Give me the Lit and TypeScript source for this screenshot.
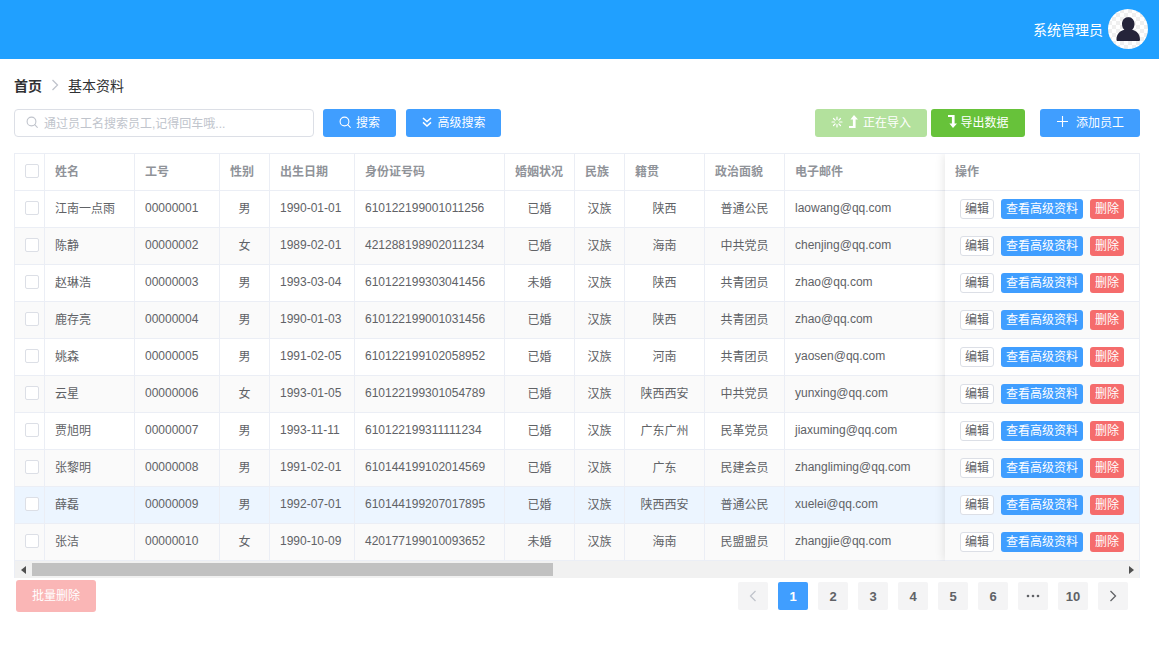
import { LitElement, html, css, svg } from "lit";
import { customElement } from "lit/decorators.js";

const rows = [
  ["江南一点雨","00000001","男","1990-01-01","610122199001011256","已婚","汉族","陕西","普通公民","laowang@qq.com"],
  ["陈静","00000002","女","1989-02-01","421288198902011234","已婚","汉族","海南","中共党员","chenjing@qq.com"],
  ["赵琳浩","00000003","男","1993-03-04","610122199303041456","未婚","汉族","陕西","共青团员","zhao@qq.com"],
  ["鹿存亮","00000004","男","1990-01-03","610122199001031456","已婚","汉族","陕西","共青团员","zhao@qq.com"],
  ["姚森","00000005","男","1991-02-05","610122199102058952","已婚","汉族","河南","共青团员","yaosen@qq.com"],
  ["云星","00000006","女","1993-01-05","610122199301054789","已婚","汉族","陕西西安","中共党员","yunxing@qq.com"],
  ["贾旭明","00000007","男","1993-11-11","610122199311111234","已婚","汉族","广东广州","民革党员","jiaxuming@qq.com"],
  ["张黎明","00000008","男","1991-02-01","610144199102014569","已婚","汉族","广东","民建会员","zhangliming@qq.com"],
  ["薛磊","00000009","男","1992-07-01","610144199207017895","已婚","汉族","陕西西安","普通公民","xuelei@qq.com"],
  ["张洁","00000010","女","1990-10-09","420177199010093652","未婚","汉族","海南","民盟盟员","zhangjie@qq.com"],
];
const heads = ["姓名","工号","性别","出生日期","身份证号码","婚姻状况","民族","籍贯","政治面貌","电子邮件"];
const centered = new Set([2,5,6,7,8]);
const latin = new Set([1,3,4,9]);

const spinner = svg`<svg class="ic" viewBox="0 0 12 12" width="12" height="12" fill="none" stroke="currentColor" stroke-width="1.200" stroke-linecap="round"><path d="M6 1v2.400M6 8.600V11M1 6h2.400M8.600 6H11M2.500 2.500l1.700 1.700M7.800 7.800l1.700 1.700M2.500 9.500l1.700-1.700M7.800 4.200l1.700-1.700"/></svg>`;
const levelUp = svg`<svg class="ic" viewBox="0 0 10 13" width="10" height="13" fill="currentColor"><path d="M6 0l4 4.600H7.600V13H1v-1.900h3.900V4.600H2.400z"/></svg>`;
const levelDown = svg`<svg class="ic" viewBox="0 0 10 13" width="10" height="13" fill="currentColor"><path d="M6 13l4-4.600H7.600V0H1v1.900h3.900v6.500H2.400z"/></svg>`;
const search = svg`<svg class="ic" viewBox="0 0 12 12" width="12" height="12" fill="none" stroke="currentColor" stroke-width="1.100"><circle cx="5.500" cy="5.500" r="4.400"/><path d="M8.700 8.700l2.600 2.600" stroke-linecap="round"/></svg>`;
const dblDown = svg`<svg class="ic" viewBox="0 0 12 12" width="12" height="12" fill="none" stroke="currentColor" stroke-width="1.500"><path d="M2 2l4 3.600L10 2M2 6.400L6 10l4-3.600"/></svg>`;
const plus = svg`<svg class="ic" viewBox="0 0 11 11" width="11" height="11" fill="none" stroke="currentColor" stroke-width="1.100"><path d="M5.500 0v11M0 5.500h11"/></svg>`;
const chevL = svg`<svg viewBox="0 0 8 12" width="8" height="12" fill="none" stroke="currentColor" stroke-width="1.300"><path d="M6.500 1L1.500 6l5 5"/></svg>`;
const chevR = svg`<svg viewBox="0 0 8 12" width="8" height="12" fill="none" stroke="currentColor" stroke-width="1.300"><path d="M1.500 1l5 5-5 5"/></svg>`;
const more = svg`<svg viewBox="0 0 14 4" width="14" height="4" fill="currentColor"><circle cx="2" cy="2" r="1.300"/><circle cx="7" cy="2" r="1.300"/><circle cx="12" cy="2" r="1.300"/></svg>`;

@customElement("app-root")
export class AppRoot extends LitElement {
  static styles = css`
    :host { display: block; font-family: "Liberation Sans", "Noto Sans CJK SC", sans-serif; color: #606266; font-size: 12px; }
    * { box-sizing: border-box; }
    .top { height: 59px; background: #20a0ff; display: flex; align-items: center; justify-content: flex-end; padding: 0 11px 2px 0; gap: 5px; color: #fff; font-size: 14px; }
    .avatar { width: 40px; height: 40px; border-radius: 50%; overflow: hidden; display: block;
      background: repeating-conic-gradient(#efefef 0 25%, #fff 0 50%) 0 0 / 8px 8px; }
    main { padding: 0 19px 0 14px; }
    .crumb { height: 50px; display: flex; align-items: center; font-size: 14px; color: #303133; padding-top: 1px; }
    .crumb b { font-weight: 700; }
    .crumb svg { color: #c0c4cc; margin: 0 9px 0 9px; }
    .tools { display: flex; align-items: center; height: 28px; }
    .input { width: 300px; height: 28px; border: 1px solid #dcdfe6; border-radius: 4px; display: flex; align-items: center; padding: 0 0 2px 11px; gap: 6px; color: #c0c4cc; margin-right: 9px; }
    .btn { height: 28px; border-radius: 3px; display: flex; align-items: center; justify-content: center; color: #fff; background: #409eff; font-size: 12px; white-space: nowrap; padding-bottom: 3px; }
    .ic { flex: none; }
    .b-search { width: 73px; gap: 5px; margin-right: 10px; }
    .b-adv { width: 95px; gap: 4px; }
    .spacer { flex: 1; }
    .b-imp { width: 112px; gap: 5px; background: #b3e19d; margin-right: 4px; }
    .b-exp { width: 94px; gap: 3px; background: #67c23a; margin-right: 15px; }
    .b-add { width: 100px; gap: 8px; padding-left: 1px; }
    .table { position: relative; margin-top: 16px; height: 425px; overflow: hidden; border: 1px solid #ebeef5; border-bottom: 0; }
    .scroll { width: 1300px; }
    .row { display: grid; grid-template-columns: 30px 90px 85px 50px 85px 150px 70px 50px 80px 80px 220px; height: 37px; }
    .row.f { grid-template-columns: 1fr; width: 194px; }
    .cell { border-right: 1px solid #ebeef5; border-bottom: 1px solid #ebeef5; display: flex; align-items: center; padding-left: 10px; white-space: nowrap; overflow: hidden; }
    .cell.c { justify-content: center; padding: 0; }
    .cell.chk { padding-left: 5px; padding-bottom: 2px; }
    .t { position: relative; top: -2px; }
    .t.l { top: -1px; }
    .head .cell { color: #909399; font-weight: 700; }
    .odd .cell { background: #fff; }
    .even .cell { background: #fafafa; }
    .hov .cell { background: #ecf5ff; }
    .row.f .cell { padding-left: 15px; gap: 7px; border-right: 0; }
    .head.f .cell { padding-left: 10px; }
    .check { width: 14px; height: 14px; border: 1px solid #dcdfe6; border-radius: 2px; background: #fff; }
    .fixed { position: absolute; top: 0; right: 0; width: 194px; background: #fff; box-shadow: 0 0 10px rgba(0,0,0,.12); }
    .mini { height: 20px; padding: 0 5px 3px; border-radius: 3px; display: flex; align-items: center; font-size: 12px; color: #fff; }
    .mini.plain { background: #fff; border: 1px solid #dcdfe6; color: #606266; padding: 0 4px 3px; }
    .mini.blue { background: #409eff; }
    .mini.red { background: #f56c6c; }
    .bar { position: absolute; left: 0; right: 0; top: 407px; height: 17px; background: #f1f1f1; display: flex; align-items: center; }
    .arrow { width: 17px; height: 17px; display: flex; align-items: center; justify-content: center; color: #505050; flex: none; }
    .thumb { width: 521px; height: 13px; background: #c1c1c1; }
    .bar .gap { flex: 1; }
    .foot { display: flex; align-items: flex-start; padding-top: 2px; }
    .batch { width: 80px; height: 32px; margin-left: 2px; background: #fab6b6; border-radius: 3px; color: #fff; display: flex; align-items: center; justify-content: center; padding-bottom: 3px; }
    .pager { display: flex; gap: 10px; margin: 2px 12px 0 auto; }
    .pg { width: 30px; height: 28px; background: #f4f4f5; border-radius: 2px; display: flex; align-items: center; justify-content: center; font-size: 13px; font-weight: 700; color: #606266; }
    .pg.on { background: #409eff; color: #fff; }
    .pg.dis { color: #c0c4cc; }
  `;

  render() {
    return html`
      <div class="top">
        <span>系统管理员</span>
        <svg class="avatar" viewBox="0 0 40 40"><path fill="#25243a" d="M20 8c3.800 0 6.500 3 6.500 7 0 2.600-1 4.600-2.400 5.800 4.400 1 7.900 4.200 7.900 9.700 0 1-.5 1.500-1.500 1.500H10c-1 0-1.500-.5-1.500-1.500 0-5.500 3.500-8.700 7.900-9.700-1.400-1.200-2.400-3.200-2.400-5.800 0-4 2.700-7 6.500-7z"/></svg>
      </div>
      <main>
        <div class="crumb"><b>首页</b>${chevR}<span>基本资料</span></div>
        <div class="tools">
          <div class="input">${search}<span>通过员工名搜索员工,记得回车哦...</span></div>
          <div class="btn b-search">${search}<span>搜索</span></div>
          <div class="btn b-adv">${dblDown}<span>高级搜索</span></div>
          <div class="spacer"></div>
          <div class="btn b-imp">${spinner}${levelUp}<span>正在导入</span></div>
          <div class="btn b-exp">${levelDown}<span>导出数据</span></div>
          <div class="btn b-add">${plus}<span>添加员工</span></div>
        </div>
        <div class="table">
          <div class="scroll">
            <div class="row head">
              <div class="cell c chk"><i class="check"></i></div>
              ${heads.map((h) => html`<div class="cell"><span class="t">${h}</span></div>`)}
            </div>
            ${rows.map((r, i) => html`
              <div class="row ${i === 8 ? "hov" : i % 2 ? "even" : "odd"}">
                <div class="cell c chk"><i class="check"></i></div>
                ${r.map((v, j) => html`<div class="cell ${centered.has(j) ? "c" : ""}"><span class="t ${latin.has(j) ? "l" : ""}">${v}</span></div>`)}
              </div>`)}
          </div>
          <div class="fixed">
            <div class="row f head"><div class="cell"><span class="t">操作</span></div></div>
            ${rows.map((_, i) => html`
              <div class="row f ${i === 8 ? "hov" : i % 2 ? "even" : "odd"}">
                <div class="cell">
                  <span class="mini plain">编辑</span>
                  <span class="mini blue">查看高级资料</span>
                  <span class="mini red">删除</span>
                </div>
              </div>`)}
          </div>
          <div class="bar">
            <span class="arrow"><svg viewBox="0 0 6 8" width="6" height="8" fill="currentColor"><path d="M5 0v8L0 4z"/></svg></span>
            <div class="thumb"></div>
            <div class="gap"></div>
            <span class="arrow"><svg viewBox="0 0 6 8" width="6" height="8" fill="currentColor"><path d="M1 0v8l5-4z"/></svg></span>
          </div>
        </div>
        <div class="foot">
          <div class="batch">批量删除</div>
          <div class="pager">
            <div class="pg dis">${chevL}</div>
            <div class="pg on">1</div>
            ${["2","3","4","5","6"].map((p) => html`<div class="pg">${p}</div>`)}
            <div class="pg">${more}</div>
            <div class="pg">10</div>
            <div class="pg">${chevR}</div>
          </div>
        </div>
      </main>
    `;
  }
}
